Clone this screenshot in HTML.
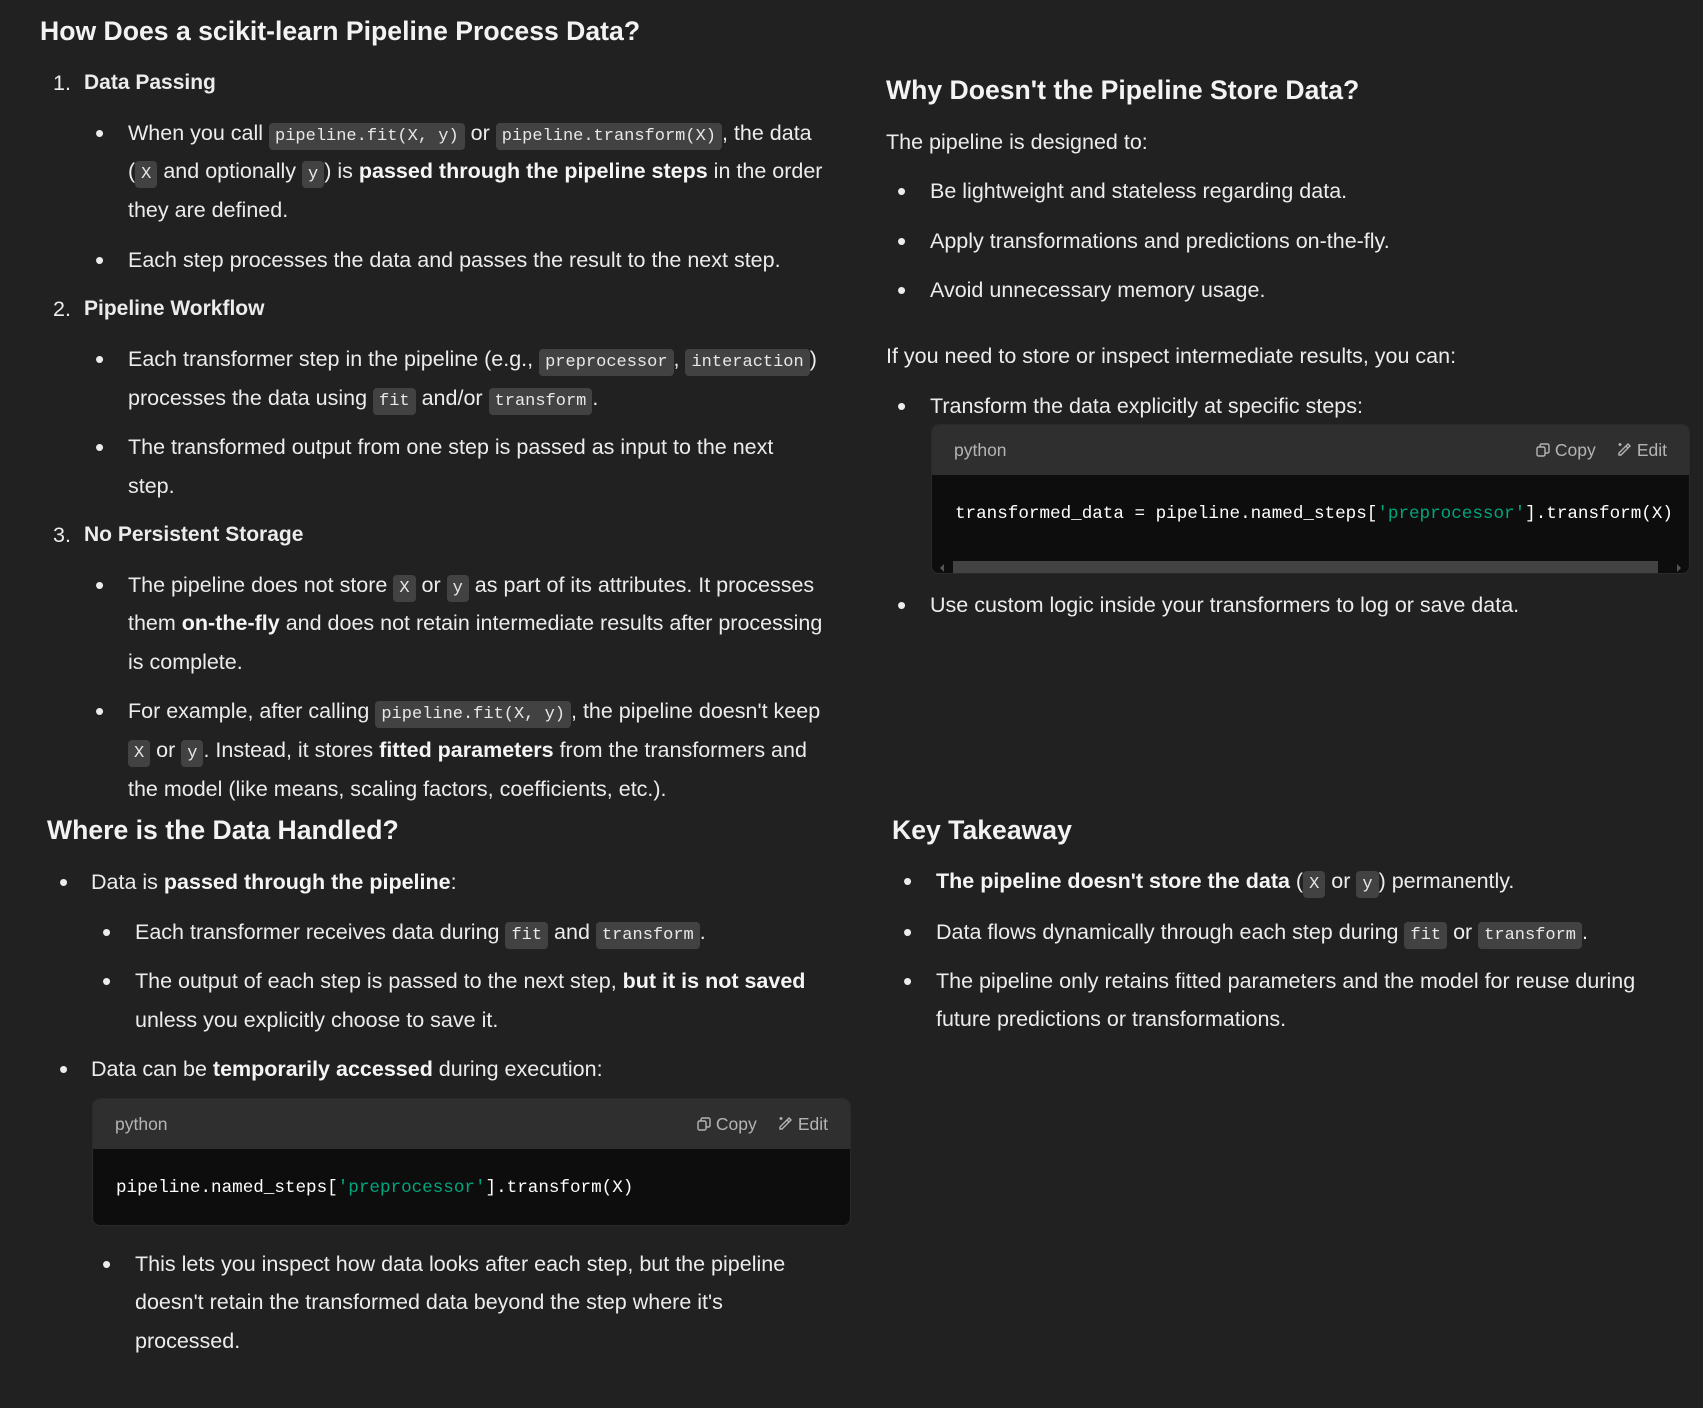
<!DOCTYPE html>
<html><head><meta charset="utf-8"><style>
html,body{margin:0;padding:0;background:#212121;}
body{width:1703px;height:1408px;position:relative;overflow:hidden;font-family:"Liberation Sans",sans-serif;color:#ececec;font-size:21.5px;}
.l{position:absolute;line-height:32px;white-space:nowrap;}
.h{font-weight:bold;font-size:26.6px;color:#f3f3f3;}
.h3{font-weight:bold;font-size:21px;}
b{font-weight:bold;color:#f5f5f5;}
code{font-family:"Liberation Mono",monospace;font-size:17px;background:#424242;border-radius:4px;padding:4px 6px;color:#e8e8e8;}
.d{position:absolute;font-size:26px;line-height:32px;}
.cb{position:absolute;border-radius:8px;overflow:hidden;background:#0d0d0d;border:1px solid #2a2a2a;}
.ch{height:50px;background:#2f2f2f;position:relative;font-size:17.5px;color:#b4b4b4;}
.ch .lang{position:absolute;left:22px;top:15px;}
.ch .btn{position:absolute;top:15px;}
.cc{position:absolute;font-family:"Liberation Mono",monospace;font-size:17.6px;color:#fff;white-space:nowrap;}
.s{color:#00a67d;}
</style></head><body>

<div class="l h" style="left:40px;top:15px">How Does a scikit-learn Pipeline Process Data?</div>

<div class="l" style="left:53px;top:67px">1.</div><div class="l h3" style="left:84px;top:67px">Data Passing</div>
<div class="d" style="left:95px;top:117px">•</div>
<div class="l" style="left:128px;top:117px">When you call <code>pipeline.fit(X, y)</code> or <code>pipeline.transform(X)</code>, the data</div>
<div class="l" style="left:128px;top:155px">(<code>X</code> and optionally <code>y</code>) is <b>passed through the pipeline steps</b> in the order</div>
<div class="l" style="left:128px;top:194px">they are defined.</div>
<div class="d" style="left:95px;top:244px">•</div>
<div class="l" style="left:128px;top:244px">Each step processes the data and passes the result to the next step.</div>

<div class="l" style="left:53px;top:293px">2.</div><div class="l h3" style="left:84px;top:293px">Pipeline Workflow</div>
<div class="d" style="left:95px;top:343px">•</div>
<div class="l" style="left:128px;top:343px">Each transformer step in the pipeline (e.g., <code>preprocessor</code>, <code>interaction</code>)</div>
<div class="l" style="left:128px;top:382px">processes the data using <code>fit</code> and/or <code>transform</code>.</div>
<div class="d" style="left:95px;top:431px">•</div>
<div class="l" style="left:128px;top:431px">The transformed output from one step is passed as input to the next</div>
<div class="l" style="left:128px;top:470px">step.</div>

<div class="l" style="left:53px;top:519px">3.</div><div class="l h3" style="left:84px;top:519px">No Persistent Storage</div>
<div class="d" style="left:95px;top:569px">•</div>
<div class="l" style="left:128px;top:569px">The pipeline does not store <code>X</code> or <code>y</code> as part of its attributes. It processes</div>
<div class="l" style="left:128px;top:607px">them <b>on-the-fly</b> and does not retain intermediate results after processing</div>
<div class="l" style="left:128px;top:646px">is complete.</div>
<div class="d" style="left:95px;top:695px">•</div>
<div class="l" style="left:128px;top:695px">For example, after calling <code>pipeline.fit(X, y)</code>, the pipeline doesn't keep</div>
<div class="l" style="left:128px;top:734px"><code>X</code> or <code>y</code>. Instead, it stores <b>fitted parameters</b> from the transformers and</div>
<div class="l" style="left:128px;top:773px">the model (like means, scaling factors, coefficients, etc.).</div>

<!-- right top -->
<div class="l h" style="left:886px;top:74px">Why Doesn't the Pipeline Store Data?</div>
<div class="l" style="left:886px;top:126px">The pipeline is designed to:</div>
<div class="d" style="left:897px;top:175px">•</div><div class="l" style="left:930px;top:175px">Be lightweight and stateless regarding data.</div>
<div class="d" style="left:897px;top:225px">•</div><div class="l" style="left:930px;top:225px">Apply transformations and predictions on-the-fly.</div>
<div class="d" style="left:897px;top:274px">•</div><div class="l" style="left:930px;top:274px">Avoid unnecessary memory usage.</div>
<div class="l" style="left:886px;top:340px">If you need to store or inspect intermediate results, you can:</div>
<div class="d" style="left:897px;top:390px">•</div><div class="l" style="left:930px;top:390px">Transform the data explicitly at specific steps:</div>

<div class="cb" style="left:931px;top:424px;width:757px;height:148px;">
  <div class="ch"><span class="lang">python</span>
    <span class="btn" style="left:604px">
      <svg width="14" height="14" viewBox="0 0 14 14" style="vertical-align:-1px" fill="none" stroke="#b4b4b4" stroke-width="1.4"><rect x="1" y="4" width="8" height="9" rx="1.5"/><path d="M4 4V2.5A1.5 1.5 0 0 1 5.5 1h6A1.5 1.5 0 0 1 13 2.5v6A1.5 1.5 0 0 1 11.5 10H9"/></svg> Copy</span>
    <span class="btn" style="left:685px">
      <svg width="15" height="15" viewBox="0 0 15 15" style="vertical-align:-1px" fill="none" stroke="#b4b4b4" stroke-width="1.4"><path d="M4 13l-2 0 0-2 7-7 2 2z M9 4l2-2 2 2-2 2"/><path d="M3 1v3M1.5 2.5h3"/></svg> Edit</span>
  </div>
  <div class="cc" style="left:23px;top:79px">transformed_data = pipeline.named_steps[<span class="s">'preprocessor'</span>].transform(X)</div>
  <div style="position:absolute;left:21px;top:136px;width:705px;height:14px;background:#434343;"></div>
  <div style="position:absolute;left:8px;top:139px;width:0;height:0;border-top:4px solid transparent;border-bottom:4px solid transparent;border-right:4px solid #555;"></div>
  <div style="position:absolute;right:8px;top:139px;width:0;height:0;border-top:4px solid transparent;border-bottom:4px solid transparent;border-left:4px solid #555;"></div>
</div>
<div class="d" style="left:897px;top:589px">•</div><div class="l" style="left:930px;top:589px">Use custom logic inside your transformers to log or save data.</div>

<!-- bottom left -->
<div class="l h" style="left:47px;top:814px">Where is the Data Handled?</div>
<div class="d" style="left:59px;top:866px">•</div>
<div class="l" style="left:91px;top:866px">Data is <b>passed through the pipeline</b>:</div>
<div class="d" style="left:102px;top:916px">•</div>
<div class="l" style="left:135px;top:916px">Each transformer receives data during <code>fit</code> and <code>transform</code>.</div>
<div class="d" style="left:102px;top:965px">•</div>
<div class="l" style="left:135px;top:965px">The output of each step is passed to the next step, <b>but it is not saved</b></div>
<div class="l" style="left:135px;top:1004px">unless you explicitly choose to save it.</div>
<div class="d" style="left:59px;top:1053px">•</div>
<div class="l" style="left:91px;top:1053px">Data can be <b>temporarily accessed</b> during execution:</div>

<div class="cb" style="left:92px;top:1098px;width:757px;height:126px;">
  <div class="ch"><span class="lang">python</span>
    <span class="btn" style="left:604px">
      <svg width="14" height="14" viewBox="0 0 14 14" style="vertical-align:-1px" fill="none" stroke="#b4b4b4" stroke-width="1.4"><rect x="1" y="4" width="8" height="9" rx="1.5"/><path d="M4 4V2.5A1.5 1.5 0 0 1 5.5 1h6A1.5 1.5 0 0 1 13 2.5v6A1.5 1.5 0 0 1 11.5 10H9"/></svg> Copy</span>
    <span class="btn" style="left:685px">
      <svg width="15" height="15" viewBox="0 0 15 15" style="vertical-align:-1px" fill="none" stroke="#b4b4b4" stroke-width="1.4"><path d="M4 13l-2 0 0-2 7-7 2 2z M9 4l2-2 2 2-2 2"/><path d="M3 1v3M1.5 2.5h3"/></svg> Edit</span>
  </div>
  <div class="cc" style="left:23px;top:79px">pipeline.named_steps[<span class="s">'preprocessor'</span>].transform(X)</div>
</div>

<div class="d" style="left:102px;top:1248px">•</div>
<div class="l" style="left:135px;top:1248px">This lets you inspect how data looks after each step, but the pipeline</div>
<div class="l" style="left:135px;top:1286px">doesn't retain the transformed data beyond the step where it's</div>
<div class="l" style="left:135px;top:1325px">processed.</div>

<!-- bottom right -->
<div class="l h" style="left:892px;top:814px">Key Takeaway</div>
<div class="d" style="left:903px;top:865px">•</div>
<div class="l" style="left:936px;top:865px"><b>The pipeline doesn't store the data</b> (<code>X</code> or <code>y</code>) permanently.</div>
<div class="d" style="left:903px;top:916px">•</div>
<div class="l" style="left:936px;top:916px">Data flows dynamically through each step during <code>fit</code> or <code>transform</code>.</div>
<div class="d" style="left:903px;top:965px">•</div>
<div class="l" style="left:936px;top:965px">The pipeline only retains fitted parameters and the model for reuse during</div>
<div class="l" style="left:936px;top:1003px">future predictions or transformations.</div>

</body></html>
